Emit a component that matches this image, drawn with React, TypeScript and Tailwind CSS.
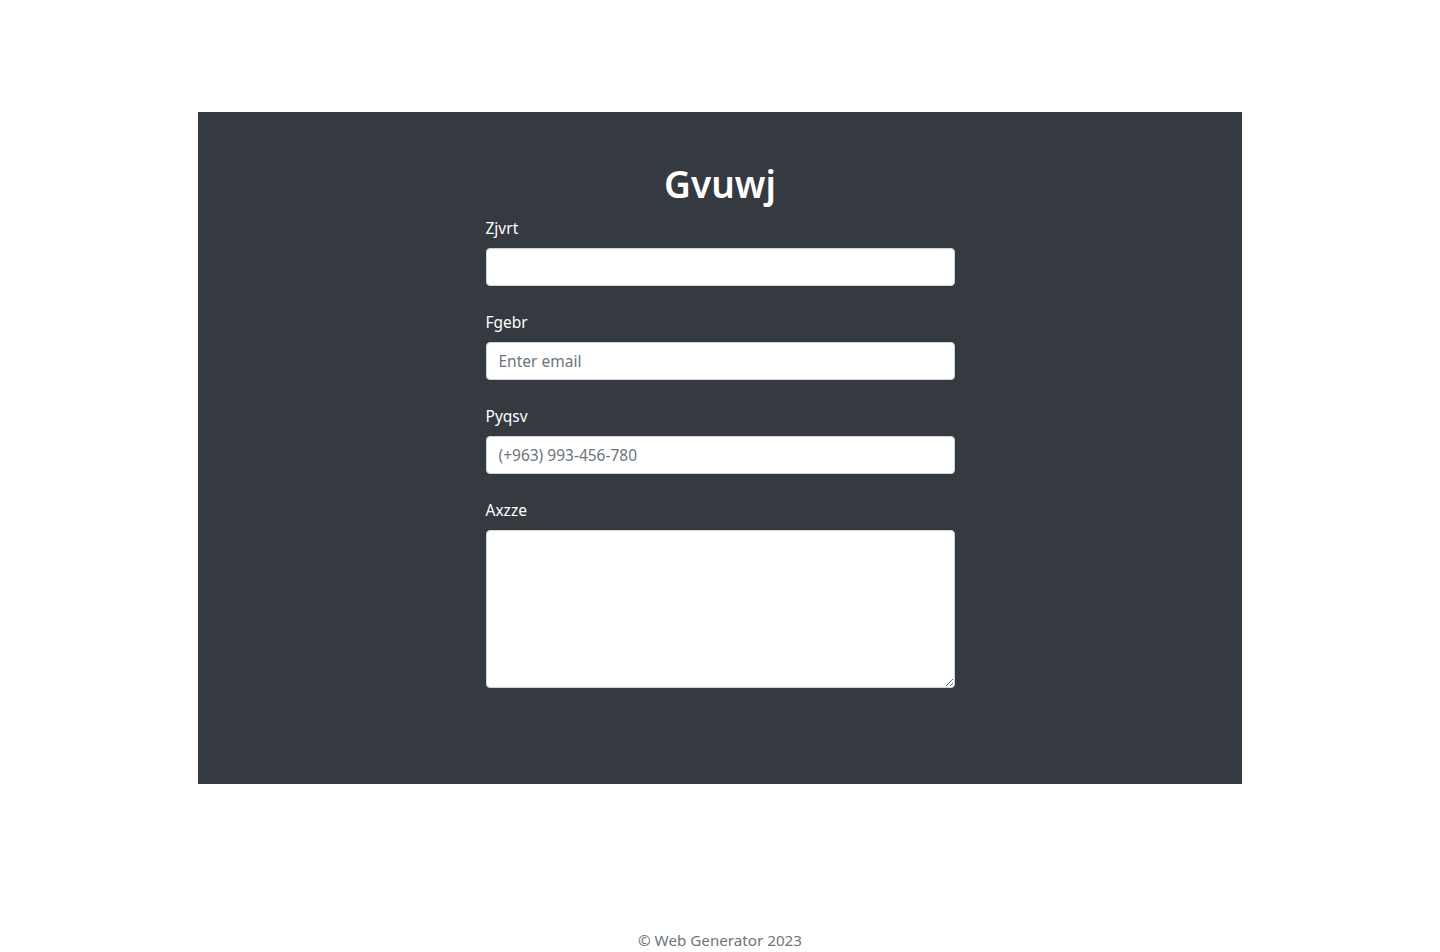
import React from "react";

const font = { fontFamily: '"Noto Sans", "Open Sans", sans-serif' };

export default function App() {
  return (
    <div className="min-h-[952px] bg-white flex flex-col" style={font}>
      <div className="pt-[112px]">
        <div className="w-[1044px] mx-auto bg-[#343a40] pt-[48px] pb-[96px]">
          <form className="w-[469px] mx-auto" onSubmit={(e) => e.preventDefault()}>
            <h1 className="text-[37px] leading-[48px] font-semibold text-white text-center mb-2">Gvuwj</h1>
            <div className="mb-6">
              <label className="block text-white text-[15.5px] leading-6 mb-2">Zjvrt</label>
              <input type="text" className="block w-full h-[38px] bg-white border border-[#ced4da] rounded px-3 text-base text-[#495057] outline-none" />
            </div>
            <div className="mb-6">
              <label className="block text-white text-[15.5px] leading-6 mb-2">Fgebr</label>
              <input type="email" placeholder="Enter email" className="block w-full h-[38px] bg-white border border-[#ced4da] rounded px-3 text-[15.5px] text-[#495057] placeholder:text-[#6c757d] outline-none" />
            </div>
            <div className="mb-6">
              <label className="block text-white text-[15.5px] leading-6 mb-2">Pyqsv</label>
              <input type="tel" placeholder="(+963) 993-456-780" className="block w-full h-[38px] bg-white border border-[#ced4da] rounded px-3 text-[15.5px] text-[#495057] placeholder:text-[#6c757d] outline-none" />
            </div>
            <div>
              <label className="block text-white text-[15.5px] leading-6 mb-2">Axzze</label>
              <textarea rows={6} className="block w-full h-[158px] bg-white border border-[#ced4da] rounded px-3 py-1.5 text-base leading-6 text-[#495057] outline-none" />
            </div>
          </form>
        </div>
      </div>
      <div className="flex-1" />
      <footer className="text-center text-[15.2px] leading-6 text-[#6c757d]">© Web Generator 2023</footer>
    </div>
  );
}
